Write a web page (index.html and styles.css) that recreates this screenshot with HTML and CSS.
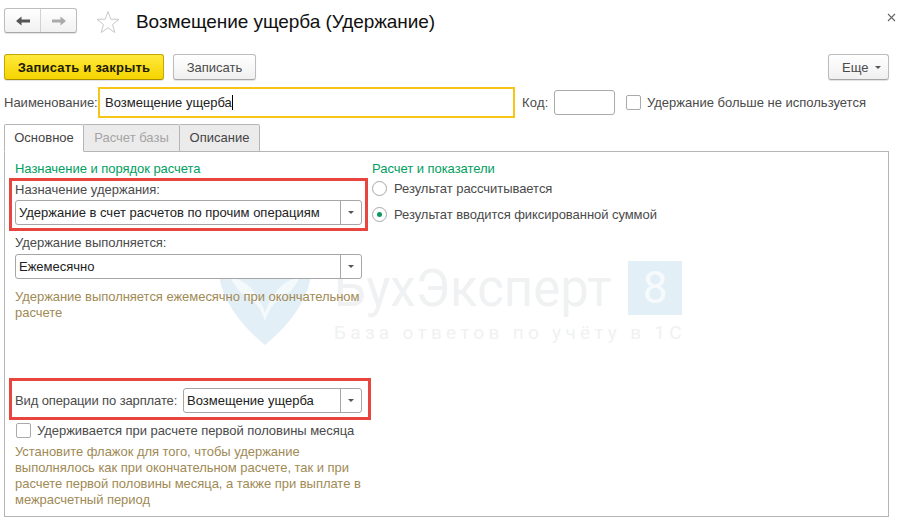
FILE: index.html
```html
<!DOCTYPE html>
<html lang="ru">
<head>
<meta charset="utf-8">
<title>Возмещение ущерба (Удержание)</title>
<link rel="stylesheet" href="styles.css">
</head>
<body>
<div class="form">
  <header class="head">
    <div class="nav">
      <span class="nav-btn"><svg width="16" height="12" viewBox="0 0 16 12"><path d="M1 6 L6.5 1.5 V4.5 H15 V7.5 H6.5 V10.5 Z" fill="#555"/></svg></span>
      <span class="nav-btn"><svg width="16" height="12" viewBox="0 0 16 12"><path d="M15 6 L9.5 1.5 V4.5 H1 V7.5 H9.5 V10.5 Z" fill="#aaa"/></svg></span>
    </div>
    <svg class="star" width="24" height="24" viewBox="0 0 24 24"><path d="M12 1.5 L14.8 9.2 L23 9.4 L16.5 14.5 L18.8 22.5 L12 17.8 L5.2 22.5 L7.5 14.5 L1 9.4 L9.2 9.2 Z" fill="none" stroke="#c9c9c9" stroke-width="1"/></svg>
    <h1 class="title">Возмещение ущерба (Удержание)</h1>
    <svg class="close" width="9" height="9" viewBox="0 0 9 9"><path d="M1 1 L8 8 M8 1 L1 8" stroke="#666" stroke-width="1.1" fill="none"/></svg>
  </header>

  <div class="toolbar">
    <button class="btn btn-primary">Записать и закрыть</button>
    <button class="btn btn-save">Записать</button>
    <button class="btn btn-more">Еще<span class="caret caret-more"></span></button>
  </div>

  <div class="name-row">
    <span class="name-label">Наименование:</span>
    <div class="name-input">Возмещение ущерба<span class="cursor"></span></div>
    <span class="code-label">Код:</span>
    <div class="code-input"></div>
    <span class="check check-top"></span>
    <span class="check-text">Удержание больше не используется</span>
  </div>

  <div class="tabs">
    <div class="tab tab-active">Основное</div>
    <div class="tab tab-disabled">Расчет базы</div>
    <div class="tab">Описание</div>
  </div>

  <main class="panel">
    <div class="watermark">
      <svg class="wm-shield" width="94" height="82" viewBox="0 0 94 82"><path d="M0 4 Q47 -4 94 4 Q92 45 47 82 Q2 45 0 4 Z" fill="#e3eff7"/><path d="M12 14 Q30 18 38 32 Q44 40 47 50 Q50 40 56 32 Q64 18 82 14 Q74 30 62 36 Q52 42 47 58 Q42 42 32 36 Q20 30 12 14 Z" fill="#f4f9fc"/></svg>
      <div class="wm-name">БухЭксперт</div>
      <div class="wm-eight">8</div>
      <div class="wm-sub">База ответов по учёту в 1С</div>
    </div>

    <section class="col-left">
      <div class="group-title">Назначение и порядок расчета</div>
      <div class="mark mark-one">
        <div class="field-label">Назначение удержания:</div>
        <div class="select"><span class="select-value">Удержание в счет расчетов по прочим операциям</span><span class="select-btn"><span class="caret"></span></span></div>
      </div>
      <div class="field-label label-second">Удержание выполняется:</div>
      <div class="select"><span class="select-value">Ежемесячно</span><span class="select-btn"><span class="caret"></span></span></div>
      <p class="note note-first">Удержание выполняется ежемесячно при окончательном расчете</p>
      <div class="mark mark-two">
        <span class="inline-label">Вид операции по зарплате:</span>
        <div class="select select-short"><span class="select-value">Возмещение ущерба</span><span class="select-btn"><span class="caret"></span></span></div>
      </div>
      <div class="half-row"><span class="check"></span><span class="half-text">Удерживается при расчете первой половины месяца</span></div>
      <p class="note note-last">Установите флажок для того, чтобы удержание выполнялось как при окончательном расчете, так и при расчете первой половины месяца, а также при выплате в межрасчетный период</p>
    </section>

    <section class="col-right">
      <div class="group-title">Расчет и показатели</div>
      <div class="radio-row radio-row-first"><span class="radio"></span><span>Результат рассчитывается</span></div>
      <div class="radio-row radio-row-second"><span class="radio radio-on"></span><span>Результат вводится фиксированной суммой</span></div>
    </section>
  </main>
</div>
</body>
</html>
```
FILE: styles.css
```css
* { box-sizing: border-box; }
html, body { margin: 0; padding: 0; background: #fff; }
body { width: 901px; height: 523px; overflow: hidden; font-family: "Liberation Sans", Arial, sans-serif; font-size: 13px; color: #4a4a4a; }
.form { padding: 0 12px 0 4px; }

.head { height: 54px; display: flex; align-items: flex-start; padding-top: 8px; position: relative; }
.nav { width: 73px; height: 25px; display: flex; border: 1px solid #bdbdbd; border-bottom-color: #a8a8a8; border-radius: 3px; background: linear-gradient(#fff, #f1f1f1); box-shadow: 0 1px 1px rgba(0,0,0,.12); }
.nav-btn { flex: 1; display: flex; align-items: center; justify-content: center; }
.nav-btn:first-child { border-right: 1px solid #d2d2d2; }
.star { margin: 2px 0 0 19px; }
.title { margin: 0 0 0 16px; font-weight: 400; font-size: 19px; line-height: 28px; color: #111; letter-spacing: -.07px; white-space: nowrap; }
.close { position: absolute; left: 883px; top: 13px; }

.toolbar { display: flex; height: 26px; }
.btn { height: 26px; padding: 0; border-radius: 3px; font-family: inherit; font-size: 13px; color: #4a4a4a; background: linear-gradient(#fff, #f0f0f0); border: 1px solid #bcbcbc; border-bottom-color: #a5a5a5; box-shadow: 0 1px 1px rgba(0,0,0,.12); }
.btn-primary { width: 160px; font-weight: 700; letter-spacing: .2px; color: #1c1c00; background: linear-gradient(#ffe93d, #f5d400); border-color: #c5a800; border-bottom-color: #a88f00; }
.btn-save { width: 83px; margin-left: 9px; }
.btn-more { width: 61px; margin-left: auto; display: flex; align-items: center; padding-left: 13px; }
.caret { display: inline-block; width: 0; height: 0; border-left: 3.5px solid transparent; border-right: 3.5px solid transparent; border-top: 3.5px solid #555; }
.caret-more { margin-left: 7px; }

.name-row { height: 31px; margin-top: 7px; display: flex; align-items: center; }
.name-label { width: 94px; white-space: nowrap; }
.name-input { width: 417px; height: 31px; border: 2px solid #f5c518; padding-left: 5px; line-height: 27px; color: #222; white-space: nowrap; display: flex; align-items: center; }
.cursor { display: inline-block; width: 1px; height: 15px; background: #000; }
.code-label { margin-left: 7px; width: 32px; letter-spacing: .2px; }
.code-input { width: 61px; height: 25px; border: 1px solid #aaa; border-radius: 3px; background: #fff; }
.check { display: block; width: 15px; height: 15px; flex: none; border: 1px solid #aaa; border-radius: 2px; background: #fff; }
.check-top { margin-left: 11px; }
.check-text { margin-left: 6px; white-space: nowrap; }

.tabs { height: 28px; margin-top: 6px; display: flex; position: relative; z-index: 1; }
.tab { height: 28px; border: 1px solid #b5b5b5; border-left: 0; background: #ebebeb; border-radius: 0 2px 0 0; line-height: 26px; color: #444; width: 80px; text-align: center; }
.tab-active { background: #fff; border-left: 1px solid #b5b5b5; border-bottom-color: #fff; border-radius: 2px 2px 0 0; }
.tab-disabled { color: #a5a5a5; width: 96px; }

.panel { height: 366px; position: relative; margin-top: -1px; border: 1px solid #b5b5b5; padding-top: 9px; display: flex; }
.col-left { width: 367px; padding-left: 10px; position: relative; flex: none; }
.col-right { position: relative; }
.group-title { line-height: 15px; color: #00a060; white-space: nowrap; letter-spacing: -.04px; }

.mark { position: relative; border: 3px solid #e8453f; margin-left: -6px; padding-left: 3px; }
.mark-one { width: 359px; height: 53px; margin-top: 2px; padding-top: 1px; }
.mark-two { width: 362px; height: 42px; margin-top: 57px; padding-top: 3px; display: flex; align-items: center; }
.field-label { line-height: 15px; height: 15px; white-space: nowrap; }
.label-second { margin-top: 4px; height: 19px; letter-spacing: -.04px; }

.select { width: 347px; height: 25px; margin-top: 3px; border: 1px solid #a6a6a6; border-radius: 3px; background: #fff; display: flex; align-items: center; }
.label-second + .select { margin-top: 0; }
.select-value { flex: 1; padding-left: 3px; color: #222; white-space: nowrap; overflow: hidden; }
.select-btn { width: 21px; height: 23px; border-left: 1px solid #a6a6a6; display: flex; align-items: center; justify-content: center; flex: none; }
.inline-label { width: 168px; white-space: nowrap; flex: none; letter-spacing: -.12px; }
.select-short { width: 179px; margin-top: 0; }

.note { margin: 0; line-height: 16px; color: #a08a55; width: 350px; position: relative; letter-spacing: -.04px; }
.note-first { margin-top: 10px; height: 32px; }
.note-last { margin-top: 6px; }

.half-row { display: flex; align-items: center; height: 15px; margin-top: 3px; padding-left: 1px; }
.half-text { margin-left: 6px; white-space: nowrap; letter-spacing: -.04px; }

.radio-row { display: flex; align-items: center; white-space: nowrap; height: 15px; letter-spacing: -.05px; }
.radio-row-first { margin-top: 5px; }
.radio-row-second { margin-top: 11px; }
.radio { width: 15px; height: 15px; margin-right: 7px; border: 1px solid #a8a8a8; border-radius: 50%; flex: none; background: #fff; position: relative; }
.radio-on::after { content: ""; position: absolute; left: 4px; top: 4px; width: 5px; height: 5px; border-radius: 50%; background: #0a9a5a; }

.watermark { position: absolute; left: 0; top: 0; width: 100%; height: 100%; pointer-events: none; }
.wm-shield { position: absolute; left: 213px; top: 111px; }
.wm-name { position: absolute; left: 329px; top: 107px; font-family: "Roboto", sans-serif; font-size: 51px; line-height: 60px; color: #f0f1f2; white-space: nowrap; }
.wm-eight { position: absolute; left: 623px; top: 109px; width: 54px; height: 54px; background: #e3eff7; color: #f6fafc; font-family: "Roboto", sans-serif; font-size: 44px; line-height: 54px; text-align: center; }
.wm-sub { position: absolute; left: 329px; top: 170px; font-family: "Roboto", sans-serif; font-size: 19px; line-height: 22px; letter-spacing: 4.3px; color: #f0f1f2; white-space: nowrap; }
```
